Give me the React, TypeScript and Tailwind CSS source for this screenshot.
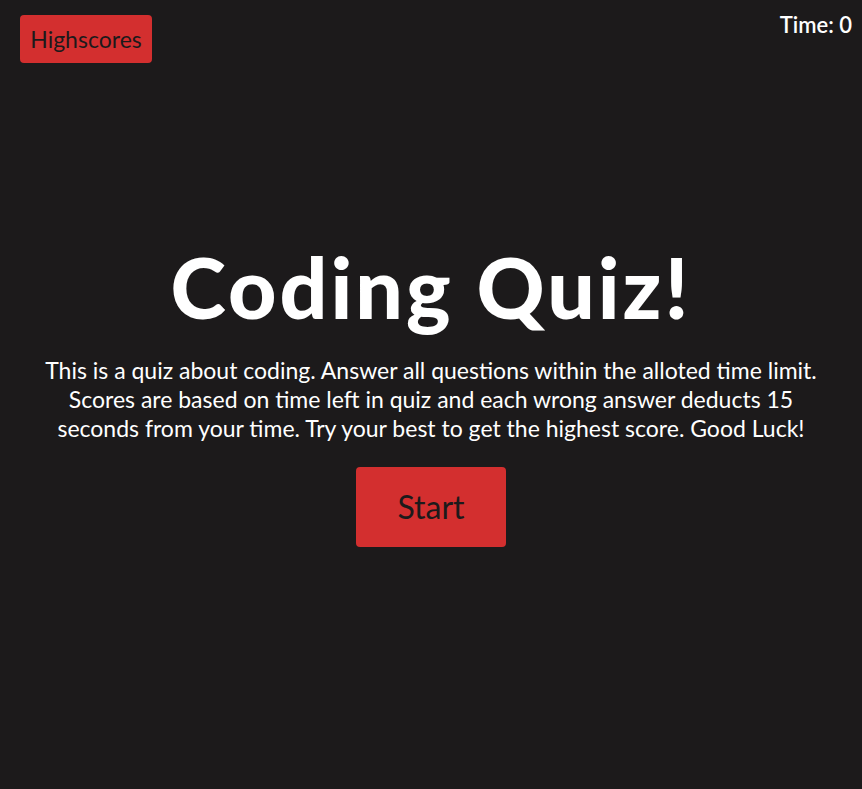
export default function App() {
  return (
    <div
      className="min-h-[789px] bg-[#1c1a1b] text-white"
      style={{ fontFamily: 'Lato, "Open Sans", sans-serif' }}
    >
      {/* Header */}
      <div className="flex items-start justify-between pl-5 pr-[10px] pt-[15px]">
        <button className="h-12 w-[132px] rounded bg-[#d32f2f] text-[23px] leading-none text-[#1c1a1b]">
          Highscores
        </button>
        <div className="-mt-[7px] text-[22px] font-semibold">Time: 0</div>
      </div>

      {/* Intro */}
      <div className="mt-[182px] flex flex-col items-center text-center">
        <h1 className="text-[84px] font-black leading-none tracking-[3px]">Coding Quiz!</h1>
        <p className="mt-[27px] text-[23px] leading-[29px]">
          This is a quiz about coding. Answer all questions within the alloted time limit.
          <br />
          Scores are based on time left in quiz and each wrong answer deducts 15
          <br />
          seconds from your time. Try your best to get the highest score. Good Luck!
        </p>
        <button className="mt-[24px] h-20 w-[150px] rounded bg-[#d32f2f] text-[32px] leading-none text-[#1c1a1b]">
          Start
        </button>
      </div>
    </div>
  )
}
